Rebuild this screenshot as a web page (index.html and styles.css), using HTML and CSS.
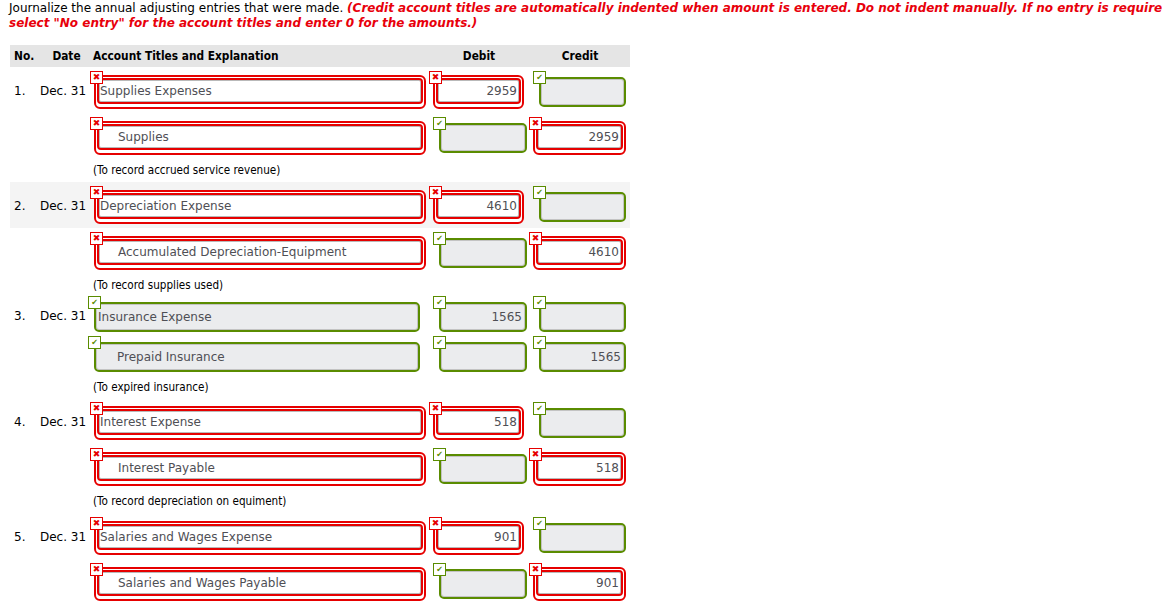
FILE: index.html
```html
<!DOCTYPE html>
<html>
<head>
<meta charset="utf-8">
<link rel="stylesheet" href="styles.css">
</head>
<body>
<div class="intro">
  <p>Journalize the annual adjusting entries that were made. <em class="warn">(Credit account titles are automatically indented when amount is entered. Do not indent manually. If no entry is required, select "No entry" for the account titles and enter 0 for the amounts.)</em></p>
</div>

<div class="journal">
  <div class="row head">
    <div class="c-no">No.</div>
    <div class="c-date">Date</div>
    <div class="c-acct">Account Titles and Explanation</div>
    <div class="c-dr">Debit</div>
    <div class="c-cr">Credit</div>
  </div>

  <!-- 1 -->
  <div class="row line red">
    <div class="c-no">1.</div>
    <div class="c-date">Dec. 31</div>
    <div class="c-acct"><div class="ring acct"><span class="mark bad">&#x2716;</span><div class="fld">Supplies Expenses</div></div></div>
    <div class="c-dr"><div class="ring dr"><span class="mark bad">&#x2716;</span><div class="fld num">2959</div></div></div>
    <div class="c-cr"><div class="ok cr"><span class="mark good">&#x2714;</span></div></div>
  </div>
  <div class="row line red">
    <div class="c-no"></div>
    <div class="c-date"></div>
    <div class="c-acct"><div class="ring acct"><span class="mark bad">&#x2716;</span><div class="fld indent">Supplies</div></div></div>
    <div class="c-dr"><div class="ok dr"><span class="mark good">&#x2714;</span></div></div>
    <div class="c-cr"><div class="ring cr"><span class="mark bad">&#x2716;</span><div class="fld num">2959</div></div></div>
  </div>
  <div class="row expl">
    <div class="c-no"></div><div class="c-date"></div>
    <div class="c-acct">(To record accrued service revenue)</div>
  </div>

  <!-- 2 -->
  <div class="row line red shade">
    <div class="c-no">2.</div>
    <div class="c-date">Dec. 31</div>
    <div class="c-acct"><div class="ring acct"><span class="mark bad">&#x2716;</span><div class="fld">Depreciation Expense</div></div></div>
    <div class="c-dr"><div class="ring dr"><span class="mark bad">&#x2716;</span><div class="fld num">4610</div></div></div>
    <div class="c-cr"><div class="ok cr"><span class="mark good">&#x2714;</span></div></div>
  </div>
  <div class="row line red">
    <div class="c-no"></div>
    <div class="c-date"></div>
    <div class="c-acct"><div class="ring acct"><span class="mark bad">&#x2716;</span><div class="fld indent">Accumulated Depreciation-Equipment</div></div></div>
    <div class="c-dr"><div class="ok dr"><span class="mark good">&#x2714;</span></div></div>
    <div class="c-cr"><div class="ring cr"><span class="mark bad">&#x2716;</span><div class="fld num">4610</div></div></div>
  </div>
  <div class="row expl">
    <div class="c-no"></div><div class="c-date"></div>
    <div class="c-acct">(To record supplies used)</div>
  </div>

  <!-- 3 -->
  <div class="row line green">
    <div class="c-no">3.</div>
    <div class="c-date">Dec. 31</div>
    <div class="c-acct"><div class="ok acct"><span class="mark good">&#x2714;</span>Insurance Expense</div></div>
    <div class="c-dr"><div class="ok dr num"><span class="mark good">&#x2714;</span>1565</div></div>
    <div class="c-cr"><div class="ok cr"><span class="mark good">&#x2714;</span></div></div>
  </div>
  <div class="row line green">
    <div class="c-no"></div>
    <div class="c-date"></div>
    <div class="c-acct"><div class="ok acct indent"><span class="mark good">&#x2714;</span>Prepaid Insurance</div></div>
    <div class="c-dr"><div class="ok dr"><span class="mark good">&#x2714;</span></div></div>
    <div class="c-cr"><div class="ok cr num"><span class="mark good">&#x2714;</span>1565</div></div>
  </div>
  <div class="row expl short">
    <div class="c-no"></div><div class="c-date"></div>
    <div class="c-acct">(To expired insurance)</div>
  </div>

  <!-- 4 -->
  <div class="row line red">
    <div class="c-no">4.</div>
    <div class="c-date">Dec. 31</div>
    <div class="c-acct"><div class="ring acct"><span class="mark bad">&#x2716;</span><div class="fld">Interest Expense</div></div></div>
    <div class="c-dr"><div class="ring dr"><span class="mark bad">&#x2716;</span><div class="fld num">518</div></div></div>
    <div class="c-cr"><div class="ok cr"><span class="mark good">&#x2714;</span></div></div>
  </div>
  <div class="row line red">
    <div class="c-no"></div>
    <div class="c-date"></div>
    <div class="c-acct"><div class="ring acct"><span class="mark bad">&#x2716;</span><div class="fld indent">Interest Payable</div></div></div>
    <div class="c-dr"><div class="ok dr"><span class="mark good">&#x2714;</span></div></div>
    <div class="c-cr"><div class="ring cr"><span class="mark bad">&#x2716;</span><div class="fld num">518</div></div></div>
  </div>
  <div class="row expl">
    <div class="c-no"></div><div class="c-date"></div>
    <div class="c-acct">(To record depreciation on equiment)</div>
  </div>

  <!-- 5 -->
  <div class="row line red">
    <div class="c-no">5.</div>
    <div class="c-date">Dec. 31</div>
    <div class="c-acct"><div class="ring acct"><span class="mark bad">&#x2716;</span><div class="fld">Salaries and Wages Expense</div></div></div>
    <div class="c-dr"><div class="ring dr"><span class="mark bad">&#x2716;</span><div class="fld num">901</div></div></div>
    <div class="c-cr"><div class="ok cr"><span class="mark good">&#x2714;</span></div></div>
  </div>
  <div class="row line red">
    <div class="c-no"></div>
    <div class="c-date"></div>
    <div class="c-acct"><div class="ring acct"><span class="mark bad">&#x2716;</span><div class="fld indent">Salaries and Wages Payable</div></div></div>
    <div class="c-dr"><div class="ok dr"><span class="mark good">&#x2714;</span></div></div>
    <div class="c-cr"><div class="ring cr"><span class="mark bad">&#x2716;</span><div class="fld num">901</div></div></div>
  </div>
</div>
</body>
</html>
```

FILE: styles.css
```css
html, body {
  margin: 0;
  padding: 0;
  background: #fff;
}
body {
  font-family: "DejaVu Sans", Verdana, sans-serif;
  font-size: 12px;
  color: #000;
  white-space: nowrap;
  overflow: hidden;
}
.intro {
  box-sizing: border-box;
  padding: 1px 0 0 9px;
  height: 45px;
  width: 1200px;
  white-space: normal;
}
.intro p {
  margin: 0;
  line-height: 15px;
  width: 1175px;
  font-size: 12px;
}
.warn {
  color: #e8000b;
  font-weight: bold;
  font-style: italic;
}
.journal {
  margin-left: 10px;
  width: 620px;
}
.row {
  display: grid;
  grid-template-columns: 30px 53px 335px 102px 100px;
  align-items: start;
}
.c-no { padding-left: 4px; }
.head {
  background: #e5e5e5;
  height: 22px;
  line-height: 23px;
  font-family: "DejaVu Sans Condensed", "DejaVu Sans", sans-serif;
  font-stretch: condensed;
  font-weight: bold;
  font-size: 11.8px;
}
.head .c-date { text-align: center; }
.head .c-dr, .head .c-cr { text-align: center; }

.line.red { height: 46px; }
.line.green { height: 40px; }
.line .c-no, .line .c-date { line-height: 16px; }
.line.red .c-no, .line.red .c-date { padding-top: 16px; }
.line.green .c-no, .line.green .c-date { padding-top: 11px; }
.shade { background: #f4f4f4; }

.line.red > div:nth-child(n+3) { padding-top: 8px; }
.line.green > div:nth-child(n+3) { padding-top: 5px; }
.line.red .ok { margin-top: 2px; }

.expl {
  height: 23px;
  line-height: 22px;
  font-family: "DejaVu Sans Condensed", "DejaVu Sans", sans-serif;
  font-stretch: condensed;
  font-size: 11.6px;
}
.expl.short { height: 21px; line-height: 20px; }

/* invalid (red) field: ring + inner bordered box */
.ring {
  position: relative;
  box-sizing: border-box;
  height: 34px;
  border: 2px solid #e60000;
  border-radius: 6px;
  padding: 1px;
  background: #fff;
}
.fld {
  box-sizing: border-box;
  height: 26px;
  border: 2px solid #e60000;
  border-radius: 4px;
  background: #fff;
  box-shadow: inset 0 0 0 1px #b9b9b9;
  color: #4f4f55;
  line-height: 23px;
  padding: 0 1px;
  font-size: 12px;
}
/* valid (green) field */
.ok {
  position: relative;
  box-sizing: border-box;
  height: 30px;
  border: 2px solid #5a8c00;
  border-radius: 5px;
  background: #ebecee;
  box-shadow: inset 0 0 0 1px #c3c3c3;
  color: #4f4f55;
  line-height: 26px;
  padding: 0 3px 0 2px;
  font-size: 12px;
}
.num { text-align: right; }
.fld.num { padding-right: 2px; }
.fld.indent { padding-left: 19px; }
.ok.indent { padding-left: 21px; }

.ring.acct { margin-left: 1px; width: 332px; }
.ok.acct { margin-left: 1px; width: 326px; }
.ring.dr { margin-left: 5px; width: 91px; }
.ok.dr { margin-left: 11px; width: 88px; }
.ring.cr { margin-left: 3px; width: 93px; }
.ok.cr { margin-left: 9px; width: 87px; }

.mark {
  position: absolute;
  box-sizing: border-box;
  width: 13px;
  height: 13px;
  background: #fff;
  z-index: 2;
  font-family: "DejaVu Sans", sans-serif;
  font-size: 9px;
  line-height: 11px;
  text-align: center;
  font-style: normal;
}
.mark.bad {
  left: -6px;
  top: -6px;
  border: 1px solid #e60000;
  color: #e60000;
}
.mark.good {
  left: -8px;
  top: -8px;
  border: 1px solid #5a8c00;
  color: #5a8c00;
  font-size: 8px;
}
```
